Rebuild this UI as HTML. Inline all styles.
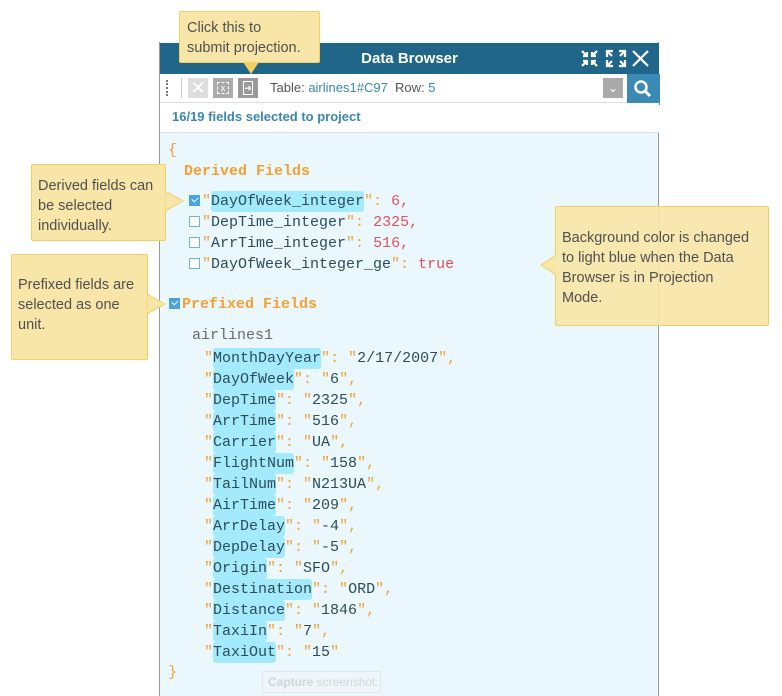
<!DOCTYPE html>
<html><head><meta charset="utf-8"><style>
*{margin:0;padding:0;box-sizing:border-box}
body{width:782px;height:696px;background:#fff;position:relative;overflow:hidden;font-family:"Liberation Sans",sans-serif}
.a{position:absolute}
.panel{left:159px;top:42px;width:500px;height:654px;border-left:1px solid #999;border-right:1px solid #999;background:#eaf7fd}
.title{left:160px;top:43px;width:499px;height:31px;background:#1f6688;color:#fff;font-weight:bold;font-size:15px;text-align:center;line-height:31px}
.tb{left:160px;top:74px;width:499px;height:29px;background:#fff;border-bottom:1px solid #ddd}
.st{left:160px;top:103px;width:499px;height:30px;background:#fff;border-bottom:1px solid #ddd;color:#3a86b0;font-size:13px;font-weight:bold;line-height:28px;padding-left:12px}
.mono{font-family:"Liberation Mono",monospace;font-size:15px;line-height:21px;white-space:pre;color:#2d4d58}
.o{color:#f5a030}
.r{color:#e0505e}
.g{color:#6a6a6a}
.h{background:#a2eafc;border-radius:3px;padding:2px 0}
.cb{display:inline-block;width:11px;height:11px;border:1px solid #6ab4e0;background:#fff;vertical-align:-1px;margin-right:2px}
.cb.on{background:#4aa3dc;border-color:#4aa3dc;position:relative}
.cb.on:after{content:"";position:absolute;left:2px;top:1px;width:5px;height:3px;border-left:1.5px solid #fff;border-bottom:1.5px solid #fff;transform:rotate(-45deg)}
.tip{background:#f7e6a8;border:1px solid #f0d060;border-radius:2px;color:#505050;font-size:14.5px;line-height:20px}
.btn{width:20px;height:20px;top:78px}
</style></head><body>
<div class="a panel"></div>
<div class="a title">Data Browser</div>
<svg class="a" style="left:580px;top:49px" width="72" height="20" viewBox="0 0 72 20">
<g stroke="#fff" stroke-width="2.2" fill="none">
<path d="M2 2l5 5M7 3v4H3M17 2l-5 5M12 3v4h4M2 17l5-5M3 12h4v4M17 17l-5-5M16 12h-4v4"/>
<path d="M27 8V2h6M27 2l5 5M45 8V2h-6M45 2l-5 5M27 11v6h6M27 17l5-5M45 11v6h-6M45 17l-5-5"/>
<path d="M53 2l15 15M68 2L53 17"/>
</g></svg>
<div class="a tb"></div>
<div class="a" style="left:166px;top:80px;width:2px;height:16px;border-left:2px dotted #777"></div>
<div class="a" style="left:181px;top:78px;width:1px;height:20px;background:#ccc"></div>
<div class="a btn" style="left:188px;background:#ddd;color:#fff;font-size:18px;line-height:20px;text-align:center">✕</div>
<div class="a btn" style="left:213px;background:#aaa"><div class="a" style="left:4px;top:4px;width:12px;height:12px;border:1px dashed #fff;color:#fff;font-size:9px;line-height:10px;text-align:center">x</div></div>
<div class="a btn" style="left:238px;background:#999"><div class="a" style="left:5px;top:3px;width:10px;height:14px;border:1.5px solid #fff;color:#fff;font-size:9px;line-height:12px;text-align:center">➜</div></div>
<div class="a" style="left:270px;top:80px;font-size:13px;color:#555">Table: <span style="color:#3a86b0">airlines1#C97</span>&nbsp; Row: <span style="color:#3a86b0">5</span></div>
<div class="a" style="left:603px;top:78px;width:20px;height:20px;background:#aaa;color:#fff;text-align:center;font-size:12px;line-height:20px">⌄</div>
<div class="a" style="left:627px;top:74px;width:33px;height:31px;background:#3a8ab5"></div>
<svg class="a" style="left:633px;top:79px" width="20" height="20"><circle cx="8" cy="8" r="5.5" stroke="#fff" stroke-width="2.5" fill="none"/><path d="M12 12l5 5" stroke="#fff" stroke-width="3"/></svg>
<div class="a st">16/19 fields selected to project</div>

<div class="a mono" style="left:168px;top:140px"><span class="o">{</span></div>
<div class="a mono o" style="left:184px;top:161px;font-weight:bold">Derived Fields</div>
<div class="a mono" style="left:189px;top:191px"><span class="cb on"></span><span class="o">"</span><span class="h">DayOfWeek_integer</span><span class="o">": </span><span class="r">6,</span>
<span class="cb"></span><span class="o">"</span>DepTime_integer<span class="o">": </span><span class="r">2325,</span>
<span class="cb"></span><span class="o">"</span>ArrTime_integer<span class="o">": </span><span class="r">516,</span>
<span class="cb"></span><span class="o">"</span>DayOfWeek_integer_ge<span class="o">": </span><span class="r">true</span></div>
<div class="a mono o" style="left:169px;top:294px;font-weight:bold"><span class="cb on"></span>Prefixed Fields</div>
<div class="a mono g" style="left:192px;top:325px">airlines1</div>
<div class="a mono" style="left:204px;top:348px"><span class="o">"</span><span class="h">MonthDayYear</span><span class="o">": "</span>2/17/2007<span class="o">",</span>
<span class="o">"</span><span class="h">DayOfWeek</span><span class="o">": "</span>6<span class="o">",</span>
<span class="o">"</span><span class="h">DepTime</span><span class="o">": "</span>2325<span class="o">",</span>
<span class="o">"</span><span class="h">ArrTime</span><span class="o">": "</span>516<span class="o">",</span>
<span class="o">"</span><span class="h">Carrier</span><span class="o">": "</span>UA<span class="o">",</span>
<span class="o">"</span><span class="h">FlightNum</span><span class="o">": "</span>158<span class="o">",</span>
<span class="o">"</span><span class="h">TailNum</span><span class="o">": "</span>N213UA<span class="o">",</span>
<span class="o">"</span><span class="h">AirTime</span><span class="o">": "</span>209<span class="o">",</span>
<span class="o">"</span><span class="h">ArrDelay</span><span class="o">": "</span>-4<span class="o">",</span>
<span class="o">"</span><span class="h">DepDelay</span><span class="o">": "</span>-5<span class="o">",</span>
<span class="o">"</span><span class="h">Origin</span><span class="o">": "</span>SFO<span class="o">",</span>
<span class="o">"</span><span class="h">Destination</span><span class="o">": "</span>ORD<span class="o">",</span>
<span class="o">"</span><span class="h">Distance</span><span class="o">": "</span>1846<span class="o">",</span>
<span class="o">"</span><span class="h">TaxiIn</span><span class="o">": "</span>7<span class="o">",</span>
<span class="o">"</span><span class="h">TaxiOut</span><span class="o">": "</span>15<span class="o">"</span></div>
<div class="a mono" style="left:168px;top:662px"><span class="o">}</span></div>
<div class="a" style="left:262px;top:671px;width:119px;height:22px;border:1px solid #e2e8ea;background:#eef6f9;color:#cfd6d9;font-size:12px;line-height:20px;padding-left:5px"><b>Capture</b> screenshot.</div>

<div class="a tip" style="left:179px;top:11px;width:141px;height:52px;padding:6px 0 0 7px">Click this to<br>submit projection.</div>
<svg class="a" style="left:243px;top:62px" width="16" height="13"><path d="M0 0h16L8 12z" fill="#f3d060"/></svg>

<div class="a tip" style="left:31px;top:164px;width:135px;height:77px;padding:11px 0 0 6px">Derived fields can<br>be selected<br>individually.</div>
<svg class="a" style="left:165px;top:190px" width="20" height="22"><path d="M0 1L18 11L0 21z" fill="#f7e6a8" stroke="#f0d060"/></svg>

<div class="a tip" style="left:11px;top:254px;width:137px;height:106px;padding:20px 0 0 6px">Prefixed fields are<br>selected as one<br>unit.</div>
<svg class="a" style="left:147px;top:293px" width="20" height="22"><path d="M0 1L18 11L0 21z" fill="#f7e6a8" stroke="#f0d060"/></svg>

<div class="a tip" style="left:555px;top:206px;width:214px;height:120px;padding:21px 0 0 6px;background:rgba(247,230,168,.92)">Background color is changed<br>to light blue when the Data<br>Browser is in Projection<br>Mode.</div>
<svg class="a" style="left:540px;top:254px" width="17" height="22"><path d="M16 1L1 11L16 21" fill="#f7e6a8" stroke="#f0d060"/></svg>
</body></html>
